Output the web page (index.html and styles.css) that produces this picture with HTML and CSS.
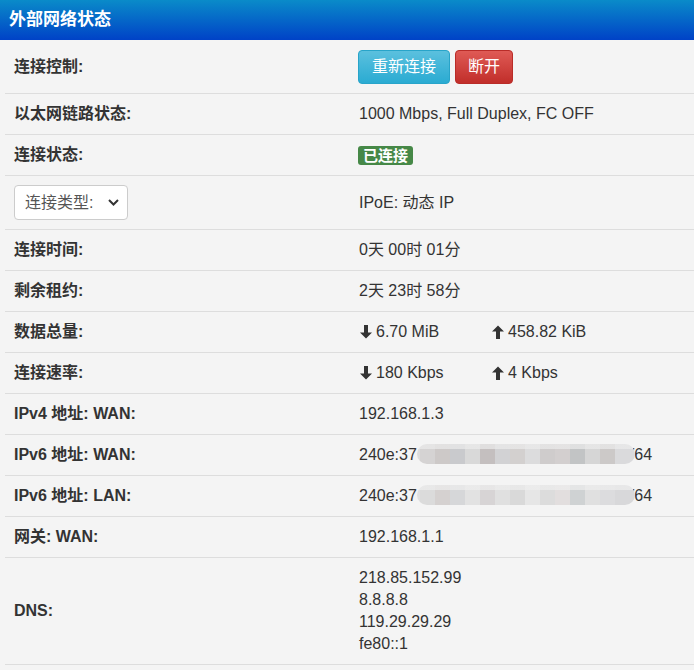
FILE: index.html
```html
<!DOCTYPE html>
<html lang="zh-CN">
<head>
<meta charset="utf-8">
<title>外部网络状态</title>
<link rel="stylesheet" href="styles.css">
</head>
<body>
<div class="panel">
  <div class="panel-head">外部网络状态</div>
  <table class="status">
    <colgroup><col class="c1"><col class="c2"></colgroup>
    <tbody>
      <tr class="first">
        <th>连接控制:</th>
        <td><div class="btns"><button class="btn btn-info">重新连接</button><button class="btn btn-danger">断开</button></div></td>
      </tr>
      <tr><th>以太网链路状态:</th><td>1000 Mbps, Full Duplex, FC OFF</td></tr>
      <tr><th>连接状态:</th><td><span class="badge">已连接</span></td></tr>
      <tr>
        <th>
          <div class="select-wrap">
            <select class="select"><option>连接类型:</option></select>
            <svg class="chev" width="11" height="7" viewBox="0 0 11 7"><path d="M1 1 L5.5 5.5 L10 1" fill="none" stroke="#333" stroke-width="2"/></svg>
          </div>
        </th>
        <td>IPoE: 动态 IP</td>
      </tr>
      <tr><th>连接时间:</th><td>0天 00时 01分</td></tr>
      <tr><th>剩余租约:</th><td>2天 23时 58分</td></tr>
      <tr>
        <th>数据总量:</th>
        <td><span class="stat"><svg class="arr" width="12" height="14" viewBox="0 0 12 14"><path d="M4 0H8V7.5H12L6 13.5L0 7.5H4Z" fill="#333"/></svg>6.70 MiB</span><span class="stat"><svg class="arr" width="12" height="14" viewBox="0 0 12 14"><path d="M4 14H8V6.5H12L6 0.5L0 6.5H4Z" fill="#333"/></svg>458.82 KiB</span></td>
      </tr>
      <tr>
        <th>连接速率:</th>
        <td><span class="stat"><svg class="arr" width="12" height="14" viewBox="0 0 12 14"><path d="M4 0H8V7.5H12L6 13.5L0 7.5H4Z" fill="#333"/></svg>180 Kbps</span><span class="stat"><svg class="arr" width="12" height="14" viewBox="0 0 12 14"><path d="M4 14H8V6.5H12L6 0.5L0 6.5H4Z" fill="#333"/></svg>4 Kbps</span></td>
      </tr>
      <tr><th>IPv4 地址: WAN:</th><td>192.168.1.3</td></tr>
      <tr><th>IPv6 地址: WAN:</th><td>240e:37<span class="blur blur-wan"></span>/64</td></tr>
      <tr><th>IPv6 地址: LAN:</th><td>240e:37<span class="blur blur-lan"></span>/64</td></tr>
      <tr><th>网关: WAN:</th><td>192.168.1.1</td></tr>
      <tr><th>DNS:</th><td>218.85.152.99<br>8.8.8.8<br>119.29.29.29<br>fe80::1</td></tr>
    </tbody>
  </table>
</div>
</body>
</html>
```

FILE: styles.css
```css
html, body {
  margin: 0;
  padding: 0;
  background: #f4f4f4;
}
body {
  font-family: "Liberation Sans", Arial, "Noto Sans CJK SC", sans-serif;
  font-size: 16px;
  color: #333;
  overflow: hidden;
}
.panel-head {
  height: 40px;
  line-height: 40px;
  padding-left: 9px;
  color: #fff;
  font-size: 17px;
  font-weight: bold;
  background: linear-gradient(to bottom, #0a8bc9, #0042c7);
}
.status {
  margin-left: 5px;
  width: 689px;
  border-collapse: collapse;
  table-layout: fixed;
}
.c1 { width: 344px; }
.status th, .status td {
  padding: 9px 9px;
  line-height: 22px;
  border-bottom: 1px solid #ddd;
  vertical-align: middle;
  text-align: left;
  white-space: nowrap;
}
.status tr.first th, .status tr.first td {
  padding-top: 10px;
}
.status td {
  padding-left: 10px;
}
.status th {
  font-weight: bold;
  color: #333;
}
.btns {
  display: flex;
  gap: 5px;
  margin-left: -1px;
}
.btn {
  font-family: inherit;
  font-size: 16px;
  color: #fff;
  height: 34px;
  line-height: 22px;
  padding: 0 12px;
  border-radius: 4px;
  border: 1px solid;
  cursor: pointer;
}
.btn-info {
  padding: 0 13px;
  background: linear-gradient(to bottom, #5bc0de, #2aabd2);
  border-color: #28a4c9;
}
.btn-danger {
  background: linear-gradient(to bottom, #df5a55, #c12e2a);
  border-color: #b92c28;
}
.badge {
  display: inline-block;
  vertical-align: middle;
  margin-left: -1px;
  background: #468847;
  color: #fff;
  font-weight: bold;
  font-size: 15px;
  line-height: 19px;
  height: 19px;
  padding: 0 5px;
  border-radius: 3px;
}
.select-wrap {
  position: relative;
  width: 114px;
  height: 35px;
}
.select {
  appearance: none;
  -webkit-appearance: none;
  width: 114px;
  height: 35px;
  box-sizing: border-box;
  padding: 0 10px;
  font-family: inherit;
  font-size: 16px;
  font-weight: normal;
  color: #555;
  background: #fff;
  border: 1px solid #ccc;
  border-radius: 4px;
}
.chev {
  position: absolute;
  right: 9px;
  top: 14px;
  pointer-events: none;
}
.stat {
  display: inline-block;
  vertical-align: top;
  width: 132px;
  line-height: 22px;
}
.arr {
  display: inline-block;
  vertical-align: -2px;
  margin: 0 4px 0 1px;
}
.blur {
  position: relative;
  display: inline-block;
  vertical-align: middle;
  width: 218px;
  height: 20px;
  margin: -3px -5px 0 0;
  border-radius: 10px;
}
.blur-wan {
  background:
    linear-gradient(to bottom, rgba(236,236,236,0.7) 0 5px, transparent 5px),
    linear-gradient(to right,
      #dcdcdc 0 3px,
      #d5d3d3 3px 18px, #cdc9c8 18px 33px, #c9cacd 33px 48px, #d9d9d9 48px 63px,
      #c4bfbf 63px 78px, #d2d2d4 78px 93px, #d3d0cf 93px 108px, #dcdcdd 108px 123px,
      #cfcccc 123px 138px, #d3cfcf 138px 153px, #c2c4c5 153px 168px, #d6d6d6 168px 183px,
      #ccc9c8 183px 198px, #dadadc 198px 218px);
}
.blur-lan {
  background:
    linear-gradient(to bottom, rgba(238,238,238,0.7) 0 5px, transparent 5px),
    linear-gradient(to right,
      #e0e0e0 0 3px,
      #dbdbdb 3px 18px, #d5d1d0 18px 33px, #d6d7d9 33px 48px, #e2e2e2 48px 63px,
      #d7d4d5 63px 78px, #e0e0e0 78px 93px, #d9d9d9 93px 108px, #e6e6e6 108px 123px,
      #dcdcdc 123px 138px, #e2dede 138px 153px, #cfd2d3 153px 168px, #e0e0e0 168px 183px,
      #dcdcde 183px 198px, #d8d8da 198px 218px);
}
```
